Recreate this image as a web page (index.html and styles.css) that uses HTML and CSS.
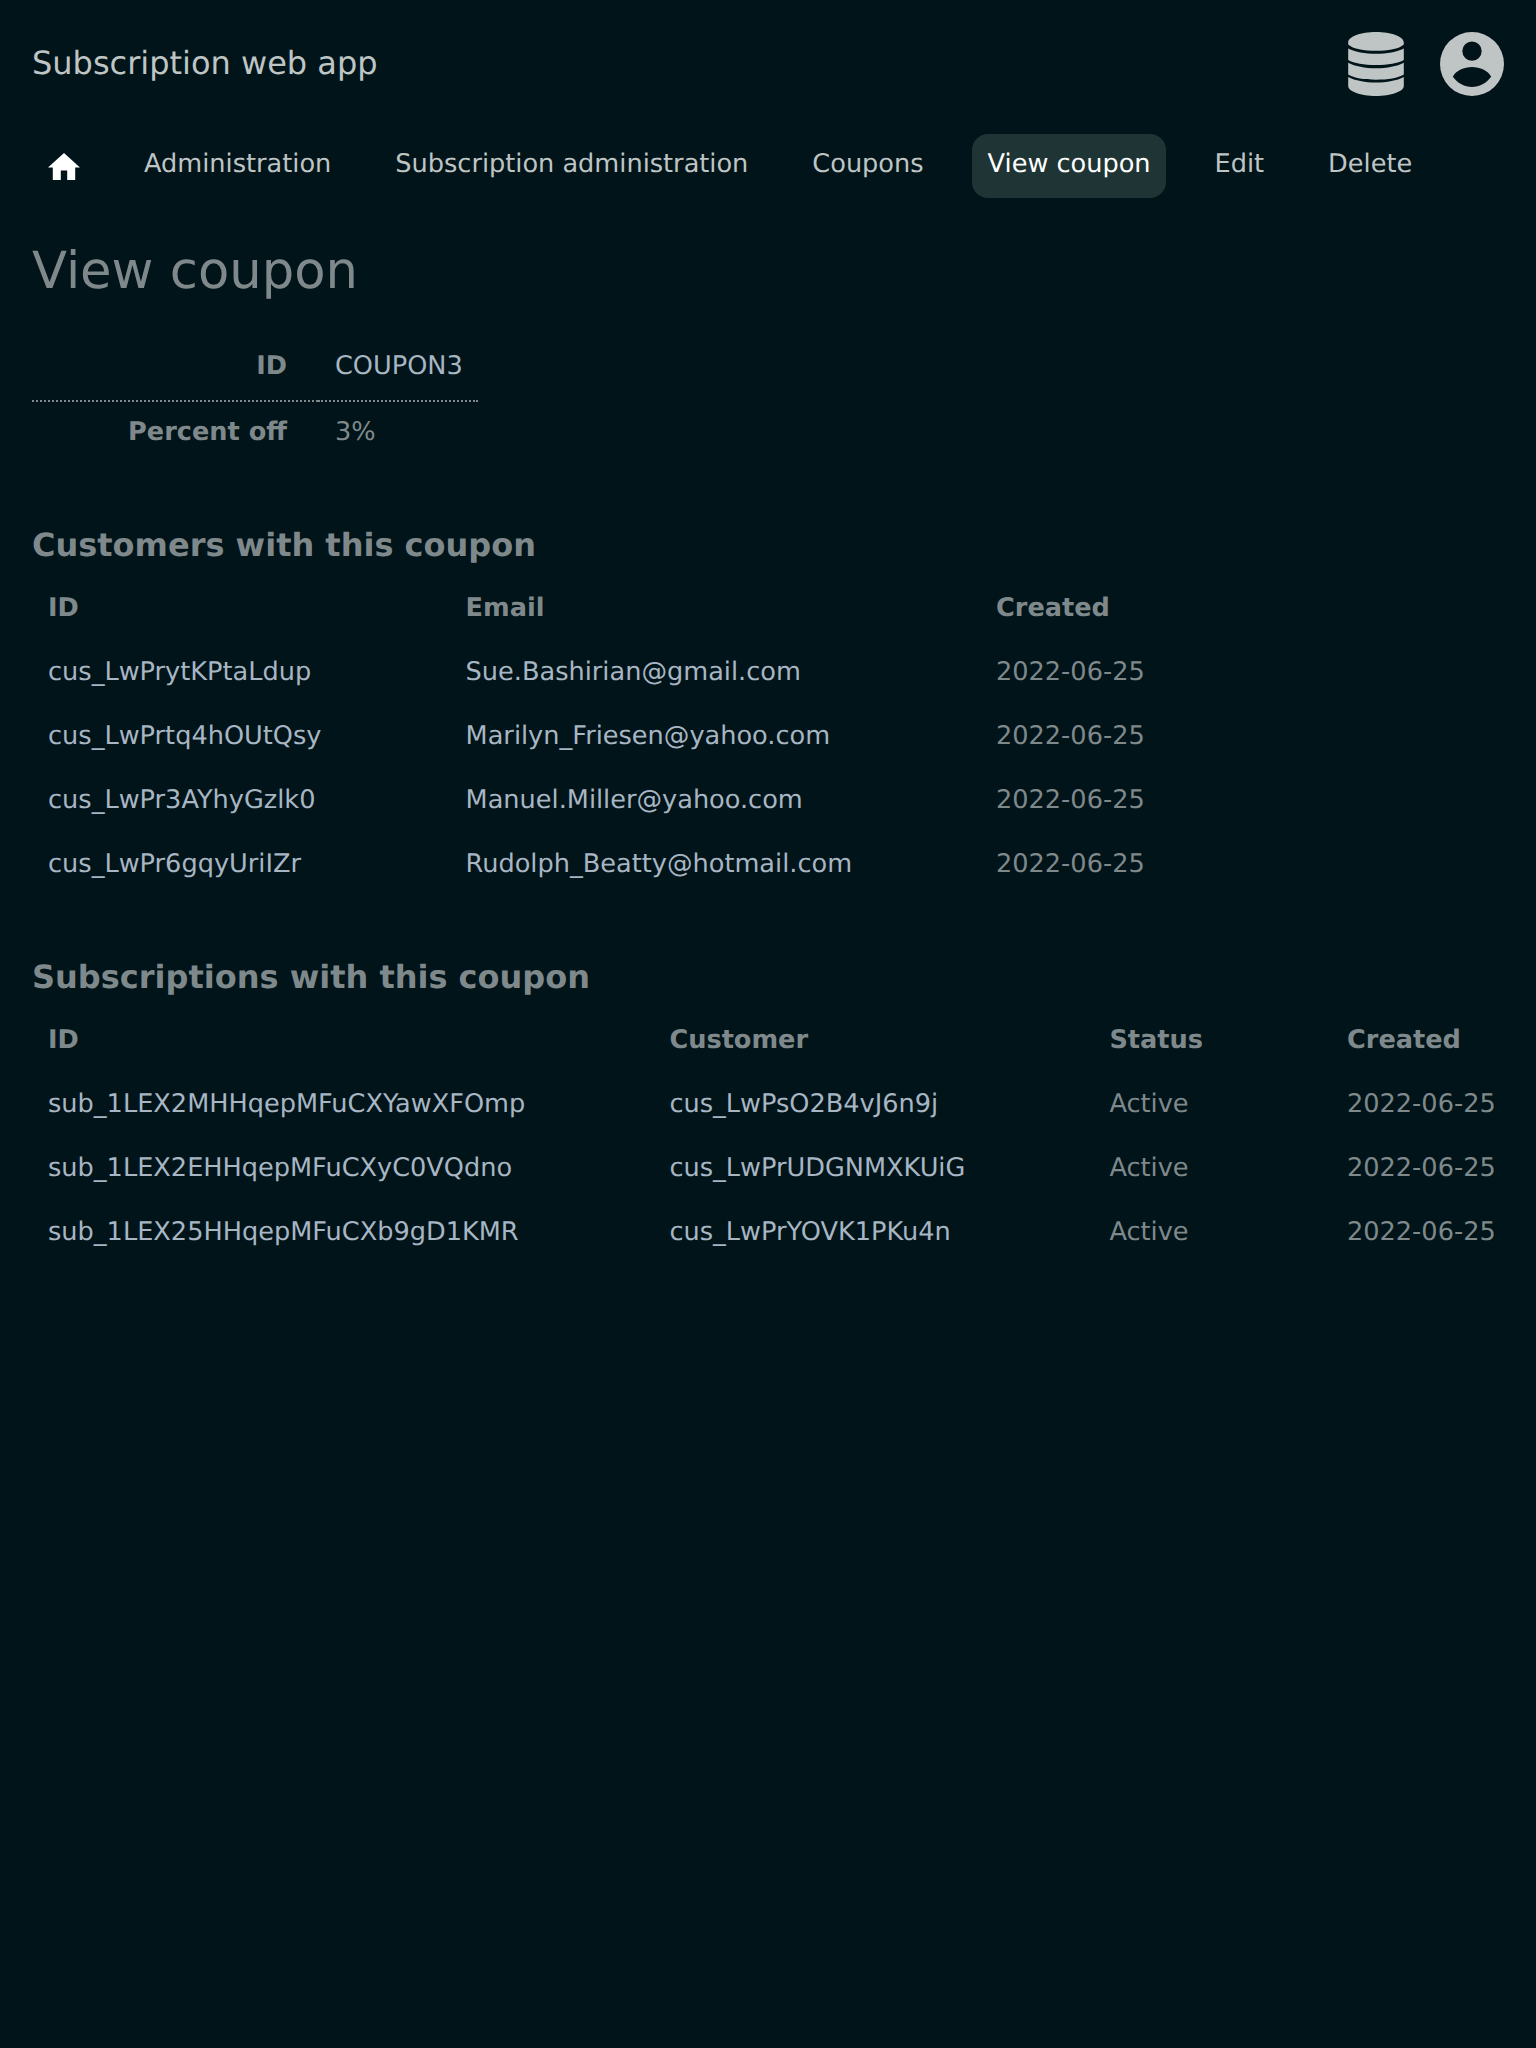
FILE: index.html
```html
<!DOCTYPE html>
<html lang="en">
<head>
<meta charset="utf-8">
<title>View coupon</title>
<link rel="stylesheet" href="styles.css">
</head>
<body>
<header class="header">
  <div class="brand">Subscription web app</div>
  <div class="menus">
    <svg class="database" viewBox="0 0 56 64"><path d="M28 0C43 0 55.800 4.500 55.800 10.500V12.500C51 17 40 18.800 28 18.800S5 17 .2 12.500V10.500C.2 4.500 13 0 28 0zM.2 16.500C7 20 17 21.800 28 21.800S49 20 55.800 16.500V28C50 31.500 40 33 28 33S6 31.500 .2 28zM.2 30.700C7 34.300 17 36.200 28 36.200S49 34.300 55.800 30.700V42.500C50 46 40 47.700 28 47.700S6 46 .2 42.500zM.2 45C7 48.600 17 50.500 28 50.500S49 48.600 55.800 45V54C55.800 59.500 43 64 28 64S.2 59.500 .2 54z"/></svg>
    <svg class="account" viewBox="0 0 64 64"><path fill-rule="evenodd" d="M32 0a32 32 0 1 0 0 64 32 32 0 0 0 0-64zM32 9.400a9.700 9.700 0 1 1 0 19.400 9.700 9.700 0 0 1 0-19.400zM12.800 44.800C16 38.500 24 35 32 35S48 38.500 51.200 44.800C46 51.500 39.500 55 32 55S18 51.500 12.800 44.800z"/></svg>
  </div>
</header>
<nav class="nav">
  <a class="home"><svg viewBox="2 3 20 17"><path d="M10 20v-6h4v6h5v-8h3L12 3 2 12h3v8z"/></svg></a>
  <a>Administration</a>
  <a>Subscription administration</a>
  <a>Coupons</a>
  <a class="current">View coupon</a>
  <a>Edit</a>
  <a>Delete</a>
</nav>
<main>
  <h1>View coupon</h1>
  <table class="details">
    <tr><th>ID</th><td><a>COUPON3</a></td></tr>
    <tr><th>Percent off</th><td>3%</td></tr>
  </table>
  <h2>Customers with this coupon</h2>
  <table class="customers">
    <colgroup><col class="customer-id"><col class="email"><col class="created"></colgroup>
    <tr><th>ID</th><th>Email</th><th>Created</th></tr>
    <tr><td><a>cus_LwPrytKPtaLdup</a></td><td><a>Sue.Bashirian@gmail.com</a></td><td>2022-06-25</td></tr>
    <tr><td><a>cus_LwPrtq4hOUtQsy</a></td><td><a>Marilyn_Friesen@yahoo.com</a></td><td>2022-06-25</td></tr>
    <tr><td><a>cus_LwPr3AYhyGzlk0</a></td><td><a>Manuel.Miller@yahoo.com</a></td><td>2022-06-25</td></tr>
    <tr><td><a>cus_LwPr6gqyUriIZr</a></td><td><a>Rudolph_Beatty@hotmail.com</a></td><td>2022-06-25</td></tr>
  </table>
  <h2>Subscriptions with this coupon</h2>
  <table class="subscriptions">
    <colgroup><col class="subscription-id"><col class="customer"><col class="status"><col class="created"></colgroup>
    <tr><th>ID</th><th>Customer</th><th>Status</th><th>Created</th></tr>
    <tr><td><a>sub_1LEX2MHHqepMFuCXYawXFOmp</a></td><td><a>cus_LwPsO2B4vJ6n9j</a></td><td>Active</td><td>2022-06-25</td></tr>
    <tr><td><a>sub_1LEX2EHHqepMFuCXyC0VQdno</a></td><td><a>cus_LwPrUDGNMXKUiG</a></td><td>Active</td><td>2022-06-25</td></tr>
    <tr><td><a>sub_1LEX25HHqepMFuCXb9gD1KMR</a></td><td><a>cus_LwPrYOVK1PKu4n</a></td><td>Active</td><td>2022-06-25</td></tr>
  </table>
</main>
</body>
</html>
```

FILE: styles.css
```css
* { box-sizing: border-box; }
body { margin: 0; background: #001419; color: #7f898b; font: 25.6px/32px "DejaVu Sans", sans-serif; text-rendering: geometricPrecision; }
.header { display: flex; justify-content: space-between; align-items: center; height: 128px; padding: 0 32px; }
.brand { font-size: 32px; padding-bottom: 2px; color: #bfc4c5; }
.menus { display: flex; gap: 36px; fill: #bfc4c5; }
.menus svg { height: 64px; display: block; }
.database { width: 56px; }
.account { width: 64px; }
.nav { display: flex; gap: 32px; height: 70px; padding: 6px 32px 0; color: #bfc4c5; }
.nav a { height: 64px; padding: 14px 16px; border-radius: 16px; white-space: nowrap; }
.nav .current { padding-right: 15.4px; margin-right: .6px; background: #1f3535; color: #fff; }
.home svg { display: block; width: 32px; height: 27.2px; margin-top: 4.8px; fill: #fff; }
main { padding: 0 32px; }
h1 { font-size: 51.2px; line-height: 64px; font-weight: 400; margin: 41px 0 33px; }
h2 { font-size: 32px; line-height: 40px; margin: 59px 0 13px; }
table { border-collapse: separate; border-spacing: 0; }
td, th { height: 64px; padding: 14px 16px 18px; vertical-align: top; text-align: left; white-space: nowrap; }
td a { color: #a8b6c4; }
.customers, .subscriptions { table-layout: fixed; }
.customers { width: 1128px; }
.subscriptions { width: 1479px; }
.customer-id { width: 417.600px; }
.email { width: 530.400px; }
.subscription-id { width: 621.400px; }
.customer { width: 440px; }
.status { width: 237.600px; }
.created { width: 180px; }
.details { table-layout: fixed; width: 446px; }
.details th { width: 286px; padding-right: 31px; text-align: right; }
.details td { padding-left: 17px; }
.details tr:first-child > * { height: 66px; border-bottom: 2px dotted #7f898b; }
```
